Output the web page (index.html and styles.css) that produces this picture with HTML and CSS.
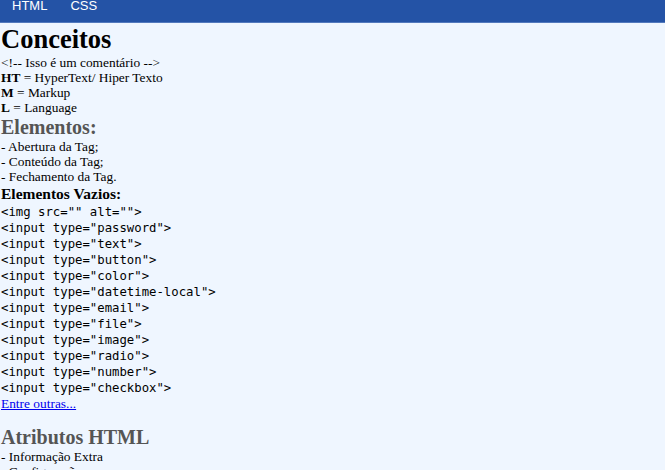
FILE: index.html
```html
<!DOCTYPE html>
<html lang="pt-BR">
<head>
<meta charset="utf-8">
<title>Conceitos HTML</title>
<link rel="stylesheet" href="styles.css">
</head>
<body>
<nav class="nav">
  <a class="nav-link" href="#">HTML</a>
  <a class="nav-link" href="#">CSS</a>
</nav>
<main class="content">
  <h1 class="title">Conceitos</h1>
  <p class="line">&lt;!-- Isso é um comentário --&gt;</p>
  <p class="line"><b>HT</b> = HyperText/ Hiper Texto</p>
  <p class="line"><b>M</b> = Markup</p>
  <p class="line"><b>L</b> = Language</p>
  <h2 class="subtitle">Elementos:</h2>
  <p class="line">- Abertura da Tag;</p>
  <p class="line">- Conteúdo da Tag;</p>
  <p class="line">- Fechamento da Tag.</p>
  <h3 class="minor">Elementos Vazios:</h3>
  <pre class="code">&lt;img src="" alt=""&gt;
&lt;input type="password"&gt;
&lt;input type="text"&gt;
&lt;input type="button"&gt;
&lt;input type="color"&gt;
&lt;input type="datetime-local"&gt;
&lt;input type="email"&gt;
&lt;input type="file"&gt;
&lt;input type="image"&gt;
&lt;input type="radio"&gt;
&lt;input type="number"&gt;
&lt;input type="checkbox"&gt;</pre>
  <a class="link" href="#">Entre outras...</a>
  <h2 class="subtitle spaced">Atributos HTML</h2>
  <p class="line">- Informação Extra</p>
  <p class="line">- Configuração</p>
</main>
</body>
</html>
```
FILE: styles.css
```css
html, body {
  margin: 0;
  padding: 0;
  background: #eff6ff;
  color: #000;
  font-family: "Liberation Serif", "Times New Roman", serif;
  font-size: 13.4px;
}
.nav {
  display: flex;
  gap: 23px;
  height: 23px;
  align-items: flex-start;
  padding: 0 12px;
  background: #2453a6;
  border-bottom: 1px solid #5279bd;
  box-sizing: border-box;
}
.nav-link {
  color: #fff;
  text-decoration: none;
  font-family: "Liberation Sans", Arial, sans-serif;
  font-size: 13px;
  line-height: 12px;
}
.content {
  padding: 0 1px;
}
.title {
  margin: 0;
  font-size: 26.5px;
  line-height: 32px;
  font-weight: bold;
}
.line {
  margin: 0;
  line-height: 15px;
}
.subtitle {
  margin: 0;
  font-size: 20px;
  line-height: 24px;
  color: #555;
  font-weight: bold;
}
.subtitle.spaced {
  margin-top: 14px;
}
.minor {
  margin: 0;
  font-size: 15.5px;
  line-height: 20px;
  font-weight: bold;
}
.code {
  margin: 0;
  font-family: "DejaVu Sans Mono", Consolas, monospace;
  font-size: 12.3px;
  line-height: 16px;
}
.link {
  display: block;
  color: #00e;
  line-height: 15px;
}
```
